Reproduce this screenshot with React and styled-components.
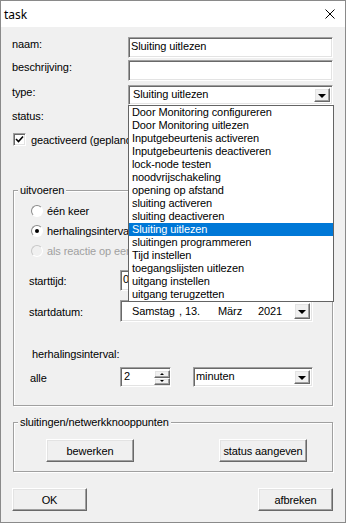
import styled, { createGlobalStyle } from "styled-components";

const GlobalStyle = createGlobalStyle`
  html, body {
    margin: 0;
    padding: 0;
    background: #ffffff;
  }
  * {
    box-sizing: border-box;
  }
`;

const Window = styled.div`
  width: 346px;
  height: 523px;
  border: 1px solid #8a8a8a;
  background: #f0f0f0;
  display: flex;
  flex-direction: column;
  font-family: "Liberation Sans", Arial, sans-serif;
  font-size: 11px;
  letter-spacing: -0.1px;
  color: #000;
  overflow: hidden;
`;

const TitleBar = styled.div`
  height: 26px;
  flex: none;
  background: #ffffff;
  display: flex;
  align-items: center;
  justify-content: space-between;
  padding: 0 10px 0 3px;
  font-family: "Noto Sans", "Open Sans", sans-serif;
  font-size: 12px;
  letter-spacing: 0;
`;

const Body = styled.div`
  flex: 1;
  display: flex;
  flex-direction: column;
  padding: 10px 12px 0 11px;
`;

const FieldRow = styled.div`
  display: flex;
  height: ${(p) => p.$h}px;
  margin-top: ${(p) => p.$mt || 0}px;
`;

const FieldLabel = styled.div`
  width: 116px;
  flex: none;
  padding-top: 1px;
  line-height: 13px;
`;

const sunken = `
  background: #ffffff;
  border: 1px solid;
  border-color: #a0a0a0 #ffffff #ffffff #a0a0a0;
  box-shadow: inset 1px 1px 0 #696969, inset -1px -1px 0 #e3e3e3;
`;

const raised = `
  background: #f0f0f0;
  border: 1px solid;
  border-color: #ffffff #696969 #696969 #ffffff;
  box-shadow: inset -1px -1px 0 #a0a0a0, inset 1px 1px 0 #e3e3e3;
`;

const TextBox = styled.div`
  ${sunken}
  width: ${(p) => p.$w}px;
  height: 100%;
  padding: 2px 0 0 2px;
  line-height: 13px;
  white-space: nowrap;
  overflow: hidden;
`;

const ComboBox = styled.div`
  ${sunken}
  position: relative;
  width: ${(p) => p.$w}px;
  height: 100%;
  display: flex;
  align-items: stretch;
  padding: 2px;
`;

const ComboText = styled.div`
  flex: 1;
  line-height: 13px;
  padding: ${(p) => p.$pad || "0 0 0 1px"};
  white-space: nowrap;
  overflow: hidden;
`;

const DropButton = styled.div`
  ${raised}
  width: 16px;
  flex: none;
  display: flex;
  align-items: center;
  justify-content: center;
`;

const Arrow = styled.div`
  width: 0;
  height: 0;
  border-left: 4px solid transparent;
  border-right: 4px solid transparent;
  border-top: 4px solid #000;
  margin-top: 1px;
`;

const DropList = styled.div`
  position: absolute;
  top: 19px;
  left: -1px;
  width: 206px;
  border: 1px solid #646464;
  background: #ffffff;
  z-index: 5;
`;

const ListItem = styled.div`
  height: 13px;
  line-height: 13px;
  padding-left: 3px;
  white-space: nowrap;
  background: ${(p) => (p.$active ? "#0078d7" : "transparent")};
  color: ${(p) => (p.$active ? "#ffffff" : "#000")};
`;

const StatusLabel = styled.div`
  margin-top: 5px;
  height: 13px;
  line-height: 13px;
`;

const CheckRow = styled.div`
  margin-top: 9px;
  height: 15px;
  display: flex;
  align-items: center;
  gap: 5px;
  padding-left: 1px;
  white-space: nowrap;
`;

const CheckBox = styled.div`
  ${sunken}
  width: 13px;
  height: 13px;
  flex: none;
  display: flex;
  align-items: center;
  justify-content: center;
`;

const Group = styled.fieldset`
  margin: ${(p) => p.$mt}px 0 0 1px;
  padding: 0;
  min-width: 0;
  border: 1px solid #a0a0a0;
  box-shadow: 1px 1px 0 #ffffff, inset 1px 1px 0 #ffffff;
`;

const Legend = styled.legend`
  margin-left: 4px;
  padding: 0 2px;
  line-height: 13px;
  background: #f0f0f0;
`;

const GroupContent = styled.div`
  display: flex;
  flex-direction: column;
  padding: ${(p) => p.$pad};
`;

const RadioRow = styled.div`
  height: ${(p) => p.$h}px;
  display: flex;
  align-items: center;
  gap: 4px;
  margin-left: 2px;
  color: ${(p) => (p.$disabled ? "#a0a0a0" : "#000")};
  white-space: nowrap;
`;

const Radio = styled.div`
  width: 12px;
  height: 12px;
  flex: none;
  border-radius: 50%;
  border: 1px solid;
  border-color: ${(p) =>
    p.$disabled
      ? "#c8c8c8 #ffffff #ffffff #c8c8c8"
      : "#8a8a8a #ffffff #ffffff #8a8a8a"};
  background: ${(p) => (p.$disabled ? "#f0f0f0" : "#ffffff")};
  display: flex;
  align-items: center;
  justify-content: center;
  &::after {
    content: "";
    width: 4px;
    height: 4px;
    border-radius: 50%;
    background: ${(p) => (p.$checked ? "#000" : "transparent")};
  }
`;

const Row = styled.div`
  display: flex;
  align-items: center;
  height: ${(p) => p.$h}px;
  margin-top: ${(p) => p.$mt || 0}px;
`;

const RowLabel = styled.div`
  width: ${(p) => p.$w || 91}px;
  margin-left: ${(p) => p.$ml || 0}px;
  flex: none;
  padding-top: 2px;
  line-height: 13px;
  white-space: nowrap;
`;

const DateBox = styled.div`
  ${sunken}
  width: 193px;
  height: 100%;
  display: flex;
  align-items: stretch;
  padding: 2px;
`;

const DateText = styled.div`
  flex: 1;
  display: flex;
  align-items: center;
  padding-left: 9px;
  white-space: nowrap;
`;

const DatePart = styled.span`
  display: inline-block;
  width: ${(p) => p.$w}px;
`;

const SpinBox = styled.div`
  ${sunken}
  width: 51px;
  height: 100%;
  display: flex;
  align-items: stretch;
  padding: 2px 0 1px 2px;
  margin-right: 22px;
`;

const SpinButtons = styled.div`
  width: 16px;
  flex: none;
  display: flex;
  flex-direction: column;
`;

const SpinButton = styled.div`
  ${raised}
  flex: 1;
  display: flex;
  align-items: center;
  justify-content: center;
`;

const SmallArrow = styled.div`
  width: 0;
  height: 0;
  border-left: 2px solid transparent;
  border-right: 2px solid transparent;
  ${(p) =>
    p.$up ? "border-bottom: 2px solid #000;" : "border-top: 2px solid #000;"}
`;

const ButtonRow = styled.div`
  display: flex;
  justify-content: space-between;
  margin-top: ${(p) => p.$mt || 0}px;
  padding: ${(p) => p.$pad || "0"};
`;

const Button = styled.div`
  ${raised}
  width: ${(p) => p.$w}px;
  height: 23px;
  display: flex;
  align-items: center;
  justify-content: center;
  white-space: nowrap;
`;

const taskTypes = [
  "Door Monitoring configureren",
  "Door Monitoring uitlezen",
  "Inputgebeurtenis activeren",
  "Inputgebeurtenis deactiveren",
  "lock-node testen",
  "noodvrijschakeling",
  "opening op afstand",
  "sluiting activeren",
  "sluiting deactiveren",
  "Sluiting uitlezen",
  "sluitingen programmeren",
  "Tijd instellen",
  "toegangslijsten uitlezen",
  "uitgang instellen",
  "uitgang terugzetten",
];

const App = () => {
  const selected = "Sluiting uitlezen";
  return (
    <>
      <GlobalStyle />
      <Window>
        <TitleBar>
          <span>task</span>
          <svg width="10" height="10" viewBox="0 0 10 10">
            <path d="M0.5 0.5L9.5 9.5M9.5 0.5L0.5 9.5" stroke="#000" strokeWidth="1" />
          </svg>
        </TitleBar>
        <Body>
          <FieldRow $h={21}>
            <FieldLabel>naam:</FieldLabel>
            <TextBox $w={206}>Sluiting uitlezen</TextBox>
          </FieldRow>
          <FieldRow $h={21} $mt={2}>
            <FieldLabel>beschrijving:</FieldLabel>
            <TextBox $w={206} />
          </FieldRow>
          <FieldRow $h={20} $mt={4}>
            <FieldLabel>type:</FieldLabel>
            <ComboBox $w={206}>
              <ComboText $pad="0 0 0 2px">{selected}</ComboText>
              <DropButton>
                <Arrow />
              </DropButton>
              <DropList>
                {taskTypes.map((t) => (
                  <ListItem key={t} $active={t === selected}>
                    {t}
                  </ListItem>
                ))}
              </DropList>
            </ComboBox>
          </FieldRow>
          <StatusLabel>status:</StatusLabel>
          <CheckRow>
            <CheckBox>
              <svg width="9" height="9" viewBox="0 0 9 9">
                <path d="M1 4L3.5 6.5L8 1.5" stroke="#000" strokeWidth="1.6" fill="none" />
              </svg>
            </CheckBox>
            <span>geactiveerd (gepland)</span>
          </CheckRow>

          <Group $mt={37}>
            <Legend>uitvoeren</Legend>
            <GroupContent $pad="3px 0 18px 15px">
              <RadioRow $h={21}>
                <Radio />
                <span>één keer</span>
              </RadioRow>
              <RadioRow $h={20}>
                <Radio $checked />
                <span>herhalingsinterval</span>
              </RadioRow>
              <RadioRow $h={20} $disabled>
                <Radio $disabled />
                <span>als reactie op een gebeurtenis</span>
              </RadioRow>
              <Row $h={21} $mt={9}>
                <RowLabel>starttijd:</RowLabel>
                <TextBox $w={110}>09:00:00</TextBox>
              </Row>
              <Row $h={22} $mt={9}>
                <RowLabel>startdatum:</RowLabel>
                <DateBox>
                  <DateText>
                    <DatePart $w={47}>Samstag</DatePart>
                    <DatePart $w={39}>, 13.</DatePart>
                    <DatePart $w={40}>März</DatePart>
                    <DatePart $w={30}>2021</DatePart>
                  </DateText>
                  <DropButton>
                    <Arrow />
                  </DropButton>
                </DateBox>
              </Row>
              <Row $h={14} $mt={24}>
                <RowLabel $ml={3} $w={120}>herhalingsinterval:</RowLabel>
              </Row>
              <Row $h={20} $mt={7}>
                <RowLabel $ml={1} $w={90}>alle</RowLabel>
                <SpinBox>
                  <ComboText $pad="0 0 0 1px">2</ComboText>
                  <SpinButtons>
                    <SpinButton>
                      <SmallArrow $up />
                    </SpinButton>
                    <SpinButton>
                      <SmallArrow />
                    </SpinButton>
                  </SpinButtons>
                </SpinBox>
                <ComboBox $w={120}>
                  <ComboText $pad="0">minuten</ComboText>
                  <DropButton>
                    <Arrow />
                  </DropButton>
                </ComboBox>
              </Row>
            </GroupContent>
          </Group>

          <Group $mt={10}>
            <Legend>sluitingen/netwerkknooppunten</Legend>
            <GroupContent $pad="10px 0 9px 0">
              <ButtonRow $pad="0 25px 0 32px">
                <Button $w={88}>bewerken</Button>
                <Button $w={88}>status aangeven</Button>
              </ButtonRow>
            </GroupContent>
          </Group>

          <ButtonRow $mt={16}>
            <Button $w={75}>OK</Button>
            <Button $w={75}>afbreken</Button>
          </ButtonRow>
        </Body>
      </Window>
    </>
  );
};

export default App;
